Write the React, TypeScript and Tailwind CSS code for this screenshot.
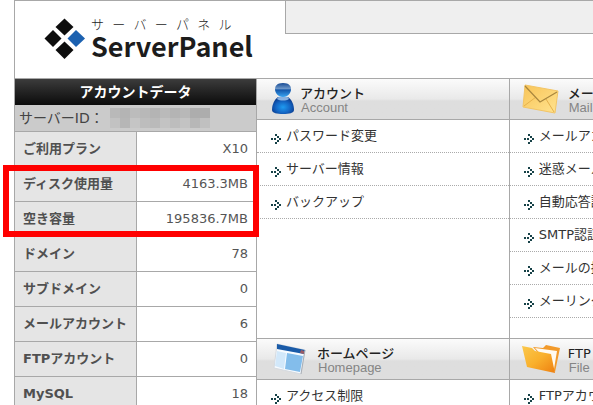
import React from "react";

type Usage = { label: string; value: string };
type PanelData = { title: string; subtitle: string; icon: React.ReactNode; items: string[] };

const usage: Usage[] = [
  { label: "ご利用プラン", value: "X10" },
  { label: "ディスク使用量", value: "4163.3MB" },
  { label: "空き容量", value: "195836.7MB" },
  { label: "ドメイン", value: "78" },
  { label: "サブドメイン", value: "0" },
  { label: "メールアカウント", value: "6" },
  { label: "FTPアカウント", value: "0" },
  { label: "MySQL", value: "18" },
];

const maskColors = [
  "#b9b9b9", "#b4b4b4", "#bcbcbc", "#b8b8b8", "#b4b4b4", "#bababa", "#b4b4b4", "#b8b8b8", "#adadad", "#adadad",
  "#c2c2c2", "#b6b6b6", "#c5c5c5", "#bdbdbd", "#bababa", "#c3c3c3", "#bdbdbd", "#c3c3c3", "#b7b7b7", "#c0c0c0",
];

function LogoMark() {
  return (
    <svg className="shrink-0" width="42" height="42" viewBox="0 0 42 42" aria-hidden="true">
      <path d="M20.500 0.500l9 8.500-9 8.500-9-8.500z" fill="#0d0d0d" />
      <path d="M9 12l8.500 8.500-8.500 8.500-8.500-8.500z" fill="#0d0d0d" />
      <path d="M32 12l9 8.500-9 8.500-8.500-8.500z" fill="#1c61b0" />
      <path d="M20.500 23.500l9 8.500-9 9-9-9z" fill="#0d0d0d" />
    </svg>
  );
}

function PersonIcon() {
  return (
    <svg className="shrink-0" width="27" height="34" viewBox="-3 0 27 34" aria-hidden="true">
      <defs>
        <radialGradient id="body" cx="0.5" cy="0.6" r="0.55">
          <stop offset="0" stopColor="#1f9bf0" />
          <stop offset="0.6" stopColor="#1466c4" />
          <stop offset="1" stopColor="#0c3f92" />
        </radialGradient>
        <linearGradient id="head" x1="0" y1="0" x2="0" y2="1">
          <stop offset="0" stopColor="#164a94" />
          <stop offset="0.4" stopColor="#6d97c8" />
          <stop offset="0.5" stopColor="#1457ab" />
          <stop offset="1" stopColor="#3aa5f2" />
        </linearGradient>
      </defs>
      <path d="M6 15C2 18 0 23 0 28c0 3 5 4 11 4s11-1 11-4c0-5-2-10-6-13z" fill="url(#body)" />
      <path d="M5 17c1-2 2-3 6-3s5 1 6 3c-3 2-9 2-12 0z" fill="#a9cdf2" opacity="0.800" />
      <path d="M11 1c6 0 8 3 8 6 0 4-3 8-8 8s-8-4-8-8c0-3 2-6 8-6z" fill="url(#head)" />
    </svg>
  );
}

function MailIcon() {
  return (
    <svg className="shrink-0" width="42" height="30" viewBox="0 0 42 30" aria-hidden="true">
      <defs>
        <linearGradient id="mail" x1="0" y1="0" x2="1" y2="1">
          <stop offset="0" stopColor="#f8c458" />
          <stop offset="1" stopColor="#ffe38f" />
        </linearGradient>
      </defs>
      <path d="M3 1l33 6-3 22L1 23z" fill="url(#mail)" stroke="#f3c565" />
      <path d="M2 22l12-9M32 28l-8-13" stroke="#e5b04c" fill="none" />
      <path d="M3 2l15 16L35 8" stroke="#a8863e" fill="none" strokeWidth="1.200" />
    </svg>
  );
}

function WindowIcon() {
  return (
    <svg className="shrink-0" width="44" height="32" viewBox="-4 0 44 32" aria-hidden="true">
      <path d="M4 1l28 6-4 24L1 25z" fill="#f7fbff" stroke="#d5dae0" />
      <path d="M4 1l28 6-1 4L4 6z" fill="#1a5ba8" />
      <path d="M28 7l3 1v3l-4-1z" fill="#9c5a63" />
      <path d="M4 8l9 2-2 16-9-3z" fill="#d2e8fa" />
      <path d="M14 10l16 3-3 16-15-3z" fill="#83bdeb" />
      <path d="M32 7l-4 24" stroke="#a9aeb5" />
    </svg>
  );
}

function FolderIcon() {
  return (
    <svg className="shrink-0" width="42" height="30" viewBox="1 0 42 30" aria-hidden="true">
      <defs>
        <linearGradient id="folder" x1="0" y1="0" x2="1" y2="1">
          <stop offset="0" stopColor="#fbc84c" />
          <stop offset="0.5" stopColor="#f9b02c" />
          <stop offset="1" stopColor="#ee7f10" />
        </linearGradient>
      </defs>
      <path d="M12 3l10 1 3-3 14 3-5 24z" fill="#f29a2b" />
      <path d="M14 4l22 3-3 18z" fill="#fffaf0" />
      <path d="M1 2l10 2 3 3 16 3 4 19-28-6z" fill="url(#folder)" />
    </svg>
  );
}

function DotArrow() {
  return (
    <svg width="10" height="10" viewBox="0 0 10 10" fill="#174248" aria-hidden="true" shapeRendering="crispEdges">
      <path d="M0 4h2v2H0zM3 4h2v2H3zM4 0h2v2H4zM6 2h2v2H6zM8 4h2v2H8zM6 6h2v2H6zM4 8h2v2H4z" />
    </svg>
  );
}

const panels: PanelData[] = [
  {
    title: "アカウント",
    subtitle: "Account",
    icon: <PersonIcon />,
    items: ["パスワード変更", "サーバー情報", "バックアップ"],
  },
  {
    title: "メール",
    subtitle: "Mail",
    icon: <MailIcon />,
    items: ["メールアカ", "迷惑メール", "自動応答設", "SMTP認証", "メールの振", "メーリング"],
  },
  { title: "ホームページ", subtitle: "Homepage", icon: <WindowIcon />, items: ["アクセス制限"] },
  { title: "FTP", subtitle: "File", icon: <FolderIcon />, items: ["FTPアカウ"] },
];

function Panel({ title, subtitle, icon, items }: PanelData) {
  return (
    <section className="min-w-0 overflow-hidden border-l border-[#a8a8a8] pb-5 whitespace-nowrap">
      <header className="flex h-[42px] items-center gap-1 border-y border-[#a8a8a8] bg-linear-to-b from-[#fbfbfb] from-0% via-[#e9e9e9] via-50% to-[#dedede] to-55% pl-3">
        {icon}
        <div className="pt-1">
          <h2 className="text-[13px] leading-[14px] font-medium text-[#222]">{title}</h2>
          <p className="pl-px font-['Liberation_Sans',sans-serif] text-[13px] leading-[14px] text-[#858585]">{subtitle}</p>
        </div>
      </header>
      <ul>
        {items.map((item) => (
          <li key={item} className="h-[33px] border-b border-dotted border-[#aaa]">
            <a href="#" className="flex h-8 items-center gap-[5px] pl-[14px] text-[13px] text-[#333]">
              <span className="pt-[6px]">
                <DotArrow />
              </span>
              {item}
            </a>
          </li>
        ))}
      </ul>
    </section>
  );
}

export default function App() {
  return (
    <div className="h-screen overflow-hidden bg-white pl-[14px] font-['DejaVu_Sans','Noto_Sans_CJK_JP',sans-serif]">
      <header className="flex h-[78px] border-t border-l border-[#a8a8a8]">
        <div className="flex w-[270px] shrink-0 items-start gap-[5px] pt-[17px] pl-[29px]">
          <LogoMark />
          <div className="whitespace-nowrap text-[#1c1c1c]">
            <p className="text-[13px] leading-[13px] font-light">{"サーバーパネル".split("").join("\u00a0\u00a0")}</p>
            <h1 className="font-['Noto_Sans_CJK_JP',sans-serif] text-[27px] leading-[30px] font-bold">ServerPanel</h1>
          </div>
        </div>
        <div className="h-[33px] flex-1 border-b border-l border-[#a8a8a8] bg-[#efefef]" />
      </header>
      <div className="grid grid-cols-[242px_minmax(0,1fr)]">
        <aside className="relative">
          <table className="w-full border-separate border-spacing-0 border-t border-l border-[#a8a8a8] text-[13px]">
            <thead>
              <tr>
                <th colSpan={2} className="h-[26px] bg-linear-to-b from-[#3c3c3c] to-[#0c0c0c] p-0 text-center text-[14px] leading-5 font-bold text-white">
                  アカウントデータ
                </th>
              </tr>
            </thead>
            <tbody>
              <tr>
                <td colSpan={2} className="h-[27px] border-b border-[#a8a8a8] bg-[#cbcbcb] p-0 pl-1 text-[14px] leading-5 text-[#444]">
                  <div className="flex items-center">
                    <span className="w-[91px]">サーバーID：</span>
                    <div className="grid grid-cols-[repeat(10,10px)] grid-rows-[10px_10px]">
                      {maskColors.map((color, index) => (
                        <span key={index} style={{ backgroundColor: color }} />
                      ))}
                    </div>
                  </div>
                </td>
              </tr>
              {usage.map(({ label, value }) => (
                <tr key={label}>
                  <th scope="row" className="h-[35px] w-[122px] border-r border-b border-[#a8a8a8] bg-[#e5e5e5] p-0 pl-2 text-left leading-5 font-bold whitespace-nowrap text-[#505050]">
                    {label}
                  </th>
                  <td className="border-b border-[#a8a8a8] p-0 pr-2 text-right leading-5 text-[#555]">{value}</td>
                </tr>
              ))}
            </tbody>
          </table>
          <div className="absolute top-[87px] -right-[3px] -left-[11px] z-10 h-[72px] border-6 border-[#f00]" />
        </aside>
        <main className="grid grid-cols-[minmax(0,3fr)_minmax(0,1fr)] self-start">
          {panels.map((panel) => (
            <Panel key={panel.title} {...panel} />
          ))}
        </main>
      </div>
    </div>
  );
}
